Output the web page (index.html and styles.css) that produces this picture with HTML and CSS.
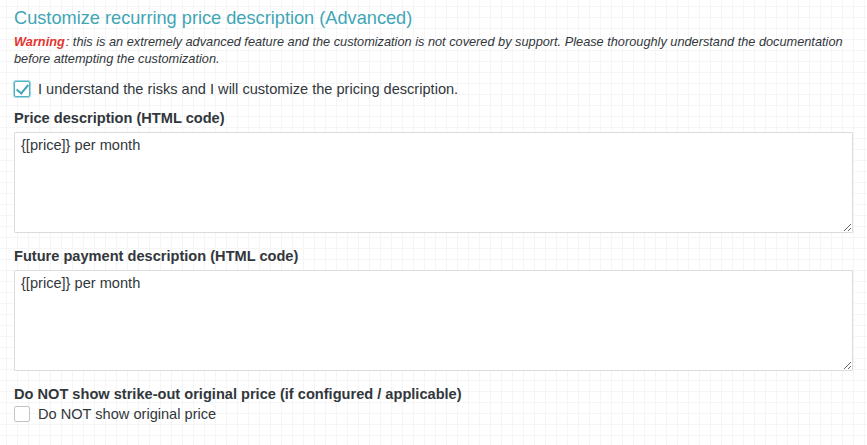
FILE: index.html
```html
<!DOCTYPE html>
<html lang="en">
<head>
    <meta charset="UTF-8">
    <meta name="viewport" content="width=device-width, initial-scale=1.0">
    <title>Recurring price description</title>
    <link rel="stylesheet" href="styles.css">
</head>
<body>
    <div id="container">
        <h3 class="sectionTitle">Customize recurring price description (Advanced)</h3>
        <p class="warning"><b>Warning</b>: this is an extremely advanced feature and the customization is not covered by support. Please thoroughly understand the documentation before attempting the customization.</p>

        <label class="checkRow topCheck">
            <input type="checkbox" class="check" checked>
            <span>I understand the risks and I will customize the pricing description.</span>
        </label>

        <div class="field">
            <label class="fieldLabel" for="priceDesc">Price description (HTML code)</label>
            <textarea id="priceDesc" class="codeBox">{[price]} per month</textarea>
        </div>

        <div class="field">
            <label class="fieldLabel" for="futureDesc">Future payment description (HTML code)</label>
            <textarea id="futureDesc" class="codeBox">{[price]} per month</textarea>
        </div>

        <div class="field">
            <span class="fieldLabel">Do NOT show strike-out original price (if configured / applicable)</span>
            <label class="checkRow">
                <input type="checkbox" class="check">
                <span>Do NOT show original price</span>
            </label>
        </div>
    </div>
</body>
</html>
```

FILE: styles.css
```css
html {
    background-color: #ffffff;
}
body {
    margin: 0;
    min-height: 445px;
    font-family: "Liberation Sans", Arial, sans-serif;
    color: #32373c;
    background-color: #ffffff;
    background-image:
        linear-gradient(to right, #f5f5f5 1px, transparent 1px),
        linear-gradient(to bottom, #f5f5f5 1px, transparent 1px);
    background-size: 11px 11px;
    background-position: 6px 6px;
}
#container {
    display: flex;
    flex-direction: column;
    padding: 7px 14px 0 14px;
    width: 839px;
}
.sectionTitle {
    margin: 0;
    font-size: 18.2px;
    font-weight: normal;
    color: #3fa6b6;
    line-height: 22px;
}
.warning {
    margin: 4px 0 0 0;
    font-size: 12.75px;
    font-style: italic;
    line-height: 17px;
    color: #32373c;
}
.warning b {
    color: #e3342f;
    font-weight: bold;
    margin-right: 1px;
}
.checkRow {
    display: flex;
    align-items: center;
    gap: 8px;
    font-size: 14.6px;
    line-height: 20px;
}
.topCheck {
    margin-top: 12px;
}
.check {
    appearance: none;
    margin: 0;
    width: 16px;
    height: 16px;
    border: 1px solid #c3c4c7;
    border-radius: 2px;
    background: #fff;
    position: relative;
}
.check:checked {
    border-color: #4fb3c3;
    box-shadow: 0 0 0 1px #a3d6df;
}
.check:checked::after {
    content: "";
    position: absolute;
    left: 4px;
    top: 0px;
    width: 5px;
    height: 10px;
    border-right: 2px solid #3ea6b6;
    border-bottom: 2px solid #3ea6b6;
    transform: rotate(40deg);
}
.field {
    display: flex;
    flex-direction: column;
    margin-top: 9px;
}
.fieldLabel {
    font-size: 14.6px;
    font-weight: bold;
    line-height: 20px;
    margin-bottom: 4px;
}
.codeBox {
    height: 101px;
    box-sizing: border-box;
    border: 1px solid #dcdcde;
    border-radius: 1px;
    padding: 4px 6px 3px 6px;
    font-family: "Liberation Sans", Arial, sans-serif;
    font-size: 14.6px;
    line-height: 17px;
    color: #32373c;
    background: #fff;
    resize: vertical;
}
.field + .field {
    margin-top: 13px;
}
.field .checkRow {
    margin-top: -4px;
}
```
